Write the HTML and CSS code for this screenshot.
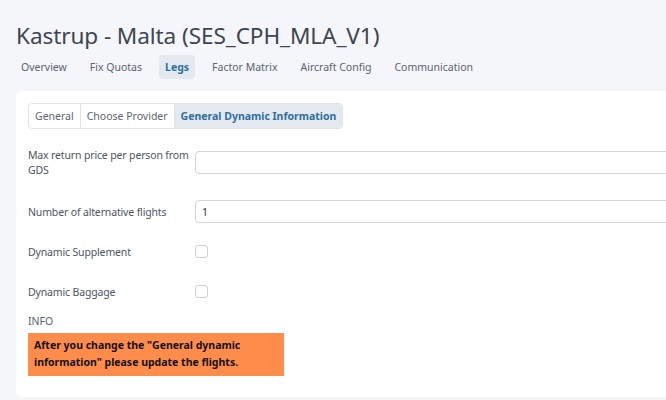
FILE: index.html
```html
<!DOCTYPE html>
<html>
<head>
<meta charset="utf-8">
<link rel="stylesheet" href="styles.css">
</head>
<body>
<div class="page">
  <h1 class="title">Kastrup - Malta (SES_CPH_MLA_V1)</h1>
  <nav class="nav">
    <a class="nav-item">Overview</a>
    <a class="nav-item">Fix Quotas</a>
    <a class="nav-item active">Legs</a>
    <a class="nav-item">Factor Matrix</a>
    <a class="nav-item">Aircraft Config</a>
    <a class="nav-item">Communication</a>
  </nav>
  <div class="card">
    <div class="tabs">
      <div class="tab">General</div>
      <div class="tab">Choose Provider</div>
      <div class="tab active">General Dynamic Information</div>
    </div>
    <div class="form">
      <div class="row row-first">
        <label class="label">Max return price per person from GDS</label>
        <input class="input" type="text" value="">
      </div>
      <div class="row">
        <label class="label">Number of alternative flights</label>
        <input class="input" type="text" value="1">
      </div>
      <div class="row">
        <label class="label">Dynamic Supplement</label>
        <span class="check"></span>
      </div>
      <div class="row">
        <label class="label">Dynamic Baggage</label>
        <span class="check"></span>
      </div>
    </div>
    <div class="info-title">INFO</div>
    <div class="info-box">After you change the "General dynamic information" please update the flights.</div>
  </div>
</div>
</body>
</html>
```

FILE: styles.css
```css
* { box-sizing: border-box; }
html, body { margin: 0; padding: 0; }
body {
  background: #f4f6f9;
  font-family: "Noto Sans", "Open Sans", sans-serif;
  color: #4c5563;
  overflow: hidden;
  width: 666px;
  height: 400px;
}
.page {
  padding: 19px 0 0 16px;
}
.title {
  margin: 0;
  font-size: 22.6px;
  font-weight: 400;
  line-height: 34px;
  color: #3e4651;
  letter-spacing: -0.1px;
}
.nav {
  display: flex;
  gap: 11px;
  margin-top: 2px;
  margin-left: -1px;
}
.nav-item {
  display: block;
  height: 24px;
  line-height: 24px;
  padding: 0 6px;
  font-size: 10.5px;
  color: #5b6472;
  border-radius: 4px;
}
.nav-item.active {
  background: #e3e9ef;
  color: #2f6f9f;
  font-weight: 700;
}
.card {
  margin-top: 12px;
  width: 720px;
  height: 306px;
  background: #fff;
  border-radius: 6px;
  padding: 12px;
}
.tabs {
  display: inline-flex;
  height: 26px;
  border: 1px solid #e0e4e8;
  border-radius: 4px;
  overflow: hidden;
}
.tab {
  line-height: 24px;
  padding: 0 6px;
  font-size: 10.5px;
  color: #5b6472;
  border-right: 1px solid #e0e4e8;
}
.tab:last-child { border-right: 0; }
.tab.active {
  background: #e3e9ef;
  color: #2f6f9f;
  font-weight: 700;
}
.form {
  display: flex;
  flex-direction: column;
  gap: 17px;
  margin-top: 17px;
}
.row {
  display: flex;
  align-items: center;
  min-height: 23px;
}
.row-first { margin-bottom: 5px; }
.label {
  width: 167px;
  flex: none;
  font-size: 10.5px;
  line-height: 15px;
  color: #4c5563;
  letter-spacing: -0.15px;
  padding-top: 2px;
}
.input {
  flex: 1;
  height: 23px;
  border: 1px solid #d3d5da;
  border-radius: 4px;
  font-family: inherit;
  font-size: 10.5px;
  color: #333;
  padding: 0 6px;
  margin: 0;
  outline: none;
}
.check {
  width: 13px;
  height: 13px;
  border: 1px solid #cfd1d8;
  border-radius: 3px;
  background: #fff;
}
.info-title {
  margin-top: 11px;
  font-size: 10.5px;
  line-height: 15px;
  color: #5b6472;
}
.info-box {
  margin-top: 4px;
  width: 256px;
  background: #ff8c4b;
  color: #111;
  font-weight: 700;
  font-size: 10.5px;
  line-height: 17px;
  padding: 4px 6px 5px;
}
```
